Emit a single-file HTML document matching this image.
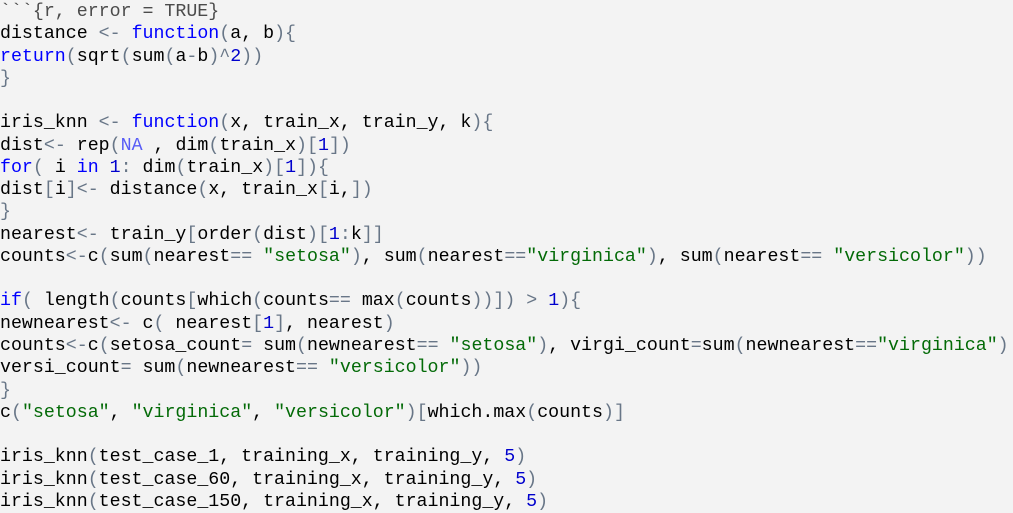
<!DOCTYPE html>
<html><head><meta charset="utf-8"><style>
body{margin:0;padding:0;background:#f3f3f3}
.code{margin-top:1px;font-family:"Liberation Mono",monospace;font-size:18.28px;line-height:22.27px;color:#000}
.code div{height:22.27px;white-space:pre}
.o{color:#687687}.k{color:#0000ff}.s{color:#036a07}.n{color:#0000cd}.c{color:#585cf6}.h{color:#4b4b4b}
</style></head><body><div class="code">
<div><span class="h">&#96;&#96;&#96;{r, error = TRUE}</span></div>
<div>distance <span class="o">&lt;-</span> <span class="k">function</span><span class="o">(</span>a, b<span class="o">){</span></div>
<div><span class="k">return</span><span class="o">(</span>sqrt<span class="o">(</span>sum<span class="o">(</span>a<span class="o">-</span>b<span class="o">)^</span><span class="n">2</span><span class="o">))</span></div>
<div><span class="o">}</span></div>
<div> </div>
<div>iris_knn <span class="o">&lt;-</span> <span class="k">function</span><span class="o">(</span>x, train_x, train_y, k<span class="o">){</span></div>
<div>dist<span class="o">&lt;-</span> rep<span class="o">(</span><span class="c">NA</span> , dim<span class="o">(</span>train_x<span class="o">)[</span><span class="n">1</span><span class="o">])</span></div>
<div><span class="k">for</span><span class="o">(</span> i <span class="k">in</span> <span class="n">1</span><span class="o">:</span> dim<span class="o">(</span>train_x<span class="o">)[</span><span class="n">1</span><span class="o">]){</span></div>
<div>dist<span class="o">[</span>i<span class="o">]&lt;-</span> distance<span class="o">(</span>x, train_x<span class="o">[</span>i,<span class="o">])</span></div>
<div><span class="o">}</span></div>
<div>nearest<span class="o">&lt;-</span> train_y<span class="o">[</span>order<span class="o">(</span>dist<span class="o">)[</span><span class="n">1</span><span class="o">:</span>k<span class="o">]]</span></div>
<div>counts<span class="o">&lt;-</span>c<span class="o">(</span>sum<span class="o">(</span>nearest<span class="o">==</span> <span class="s">"setosa"</span><span class="o">)</span>, sum<span class="o">(</span>nearest<span class="o">==</span><span class="s">"virginica"</span><span class="o">)</span>, sum<span class="o">(</span>nearest<span class="o">==</span> <span class="s">"versicolor"</span><span class="o">))</span></div>
<div> </div>
<div><span class="k">if</span><span class="o">(</span> length<span class="o">(</span>counts<span class="o">[</span>which<span class="o">(</span>counts<span class="o">==</span> max<span class="o">(</span>counts<span class="o">))])</span> <span class="o">&gt;</span> <span class="n">1</span><span class="o">){</span></div>
<div>newnearest<span class="o">&lt;-</span> c<span class="o">(</span> nearest<span class="o">[</span><span class="n">1</span><span class="o">]</span>, nearest<span class="o">)</span></div>
<div>counts<span class="o">&lt;-</span>c<span class="o">(</span>setosa_count<span class="o">=</span> sum<span class="o">(</span>newnearest<span class="o">==</span> <span class="s">"setosa"</span><span class="o">)</span>, virgi_count<span class="o">=</span>sum<span class="o">(</span>newnearest<span class="o">==</span><span class="s">"virginica"</span><span class="o">)</span></div>
<div>versi_count<span class="o">=</span> sum<span class="o">(</span>newnearest<span class="o">==</span> <span class="s">"versicolor"</span><span class="o">))</span></div>
<div><span class="o">}</span></div>
<div>c<span class="o">(</span><span class="s">"setosa"</span>, <span class="s">"virginica"</span>, <span class="s">"versicolor"</span><span class="o">)[</span>which.max<span class="o">(</span>counts<span class="o">)]</span></div>
<div> </div>
<div>iris_knn<span class="o">(</span>test_case_1, training_x, training_y, <span class="n">5</span><span class="o">)</span></div>
<div>iris_knn<span class="o">(</span>test_case_60, training_x, training_y, <span class="n">5</span><span class="o">)</span></div>
<div>iris_knn<span class="o">(</span>test_case_150, training_x, training_y, <span class="n">5</span><span class="o">)</span></div>
</div></body></html>
